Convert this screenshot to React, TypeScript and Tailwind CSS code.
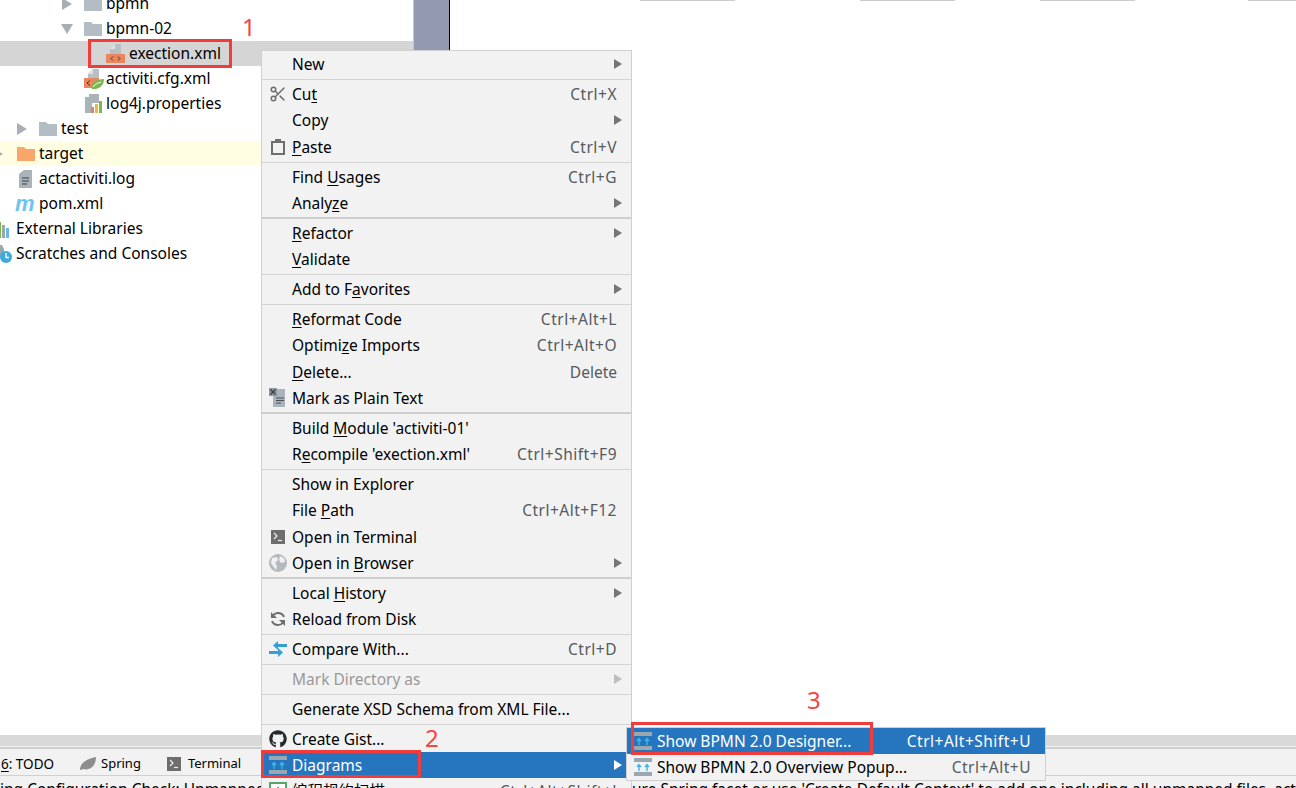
import { FaGithub } from "react-icons/fa";
import { Scissors } from "lucide-react";

const uiFont = "font-['Noto_Sans','Noto_Sans_CJK_SC',sans-serif]";

// "_x" marks the mnemonic letter
function Label({ text }: { text: string }) {
  const i = text.indexOf("_");
  if (i < 0) return <span className="pt-[2px]">{text}</span>;
  return (
    <span className="pt-[2px]">
      {text.slice(0, i)}
      <u className="underline decoration-1 underline-offset-2">{text[i + 1]}</u>
      {text.slice(i + 2)}
    </span>
  );
}

function Arrow({ className }: { className: string }) {
  return (
    <svg width="8" height="10" viewBox="0 0 8 10" className={className}>
      <path d="M0 0L8 5L0 10Z" fill="currentColor" />
    </svg>
  );
}

function DiagramIcon() {
  return (
    <svg width="18" height="18" viewBox="0 0 18 18">
      <rect x="0" y="0" width="18" height="4" fill="#9aa7b0" />
      <rect x="0" y="14" width="18" height="4" fill="#9aa7b0" />
      <path d="M5 13V7M3 9L5 6.5L7 9M13 13V7M11 9L13 6.5L15 9" stroke="#40b6e0" strokeWidth="1.4" fill="none" />
    </svg>
  );
}

function ClipboardIcon() {
  return (
    <svg width="14" height="16" viewBox="0 0 14 16">
      <path d="M1 3H13V15H1Z" fill="none" stroke="#6e6e6e" strokeWidth="2" />
      <rect x="4" y="0" width="6" height="4" fill="#6e6e6e" />
    </svg>
  );
}

function PlainTextIcon() {
  return (
    <svg width="18" height="20" viewBox="0 0 18 20">
      <rect x="4" y="1" width="12" height="18" fill="#a9b5bd" />
      <rect x="0" y="0" width="8" height="8" fill="#8f9aa1" />
      <path d="M1.500 1.500L6.500 6.500M6.500 1.500L1.500 6.500" stroke="#3c4144" strokeWidth="1.4" />
      <path d="M7 10H15M7 12.500H15M7 15H12" stroke="#4c5052" strokeWidth="1" />
    </svg>
  );
}

function TerminalIcon({ size }: { size: number }) {
  return (
    <svg width={size} height={size} viewBox="0 0 14 14">
      <rect width="14" height="14" fill="#6e6e6e" />
      <path d="M3 3L6 6L3 9" stroke="#eee" strokeWidth="1.2" fill="none" />
      <path d="M7 10.500H11" stroke="#eee" strokeWidth="1.2" />
    </svg>
  );
}

function GlobeIcon() {
  return (
    <svg width="18" height="18" viewBox="0 0 18 18">
      <circle cx="9" cy="9" r="9" fill="#b4b9bd" />
      <path d="M3 4L8 3L9 6L6 9L8 12L7 16L4 12L2 9ZM11 2L15 4L16 8L12 9L10 6Z" fill="#eef0f1" />
    </svg>
  );
}

function ReloadIcon() {
  return (
    <svg width="16" height="16" viewBox="0 0 16 16">
      <path d="M14 6A6.300 6.300 0 0 0 3 4.500M2 10A6.300 6.300 0 0 0 13 11.500" fill="none" stroke="#6e6e6e" strokeWidth="2" />
      <path d="M1 1V7H7ZM15 15V9H9Z" fill="#6e6e6e" />
    </svg>
  );
}

function CompareIcon() {
  return (
    <svg width="18" height="18" viewBox="0 0 18 18">
      <path d="M9 1V4H18V7H9V10L4 5.500Z" fill="#389fd6" />
      <path d="M9 8V11H0V14H9V17L14 12.500Z" fill="#389fd6" />
    </svg>
  );
}

function InspectIcon() {
  return (
    <svg width="18" height="18" viewBox="0 0 18 18">
      <rect x="1" y="1" width="16" height="16" fill="#fff" stroke="#59a869" strokeWidth="2" />
      <path d="M5 12V8M9 12V5M13 12V9" stroke="#59a869" strokeWidth="2" />
    </svg>
  );
}

type Row =
  | { sep: true; thick?: boolean }
  | {
      sep?: false;
      label: string;
      key2?: string;
      sub?: boolean;
      tall?: boolean;
      disabled?: boolean;
      active?: boolean;
      icon?: React.ReactNode;
    };

const menu: Row[] = [
  { label: "New", sub: true },
  { sep: true },
  { label: "Cu_t", key2: "Ctrl+X", icon: <Scissors size={18} color="#6e6e6e" strokeWidth={2} /> },
  { label: "Copy", sub: true, tall: true },
  { label: "_Paste", key2: "Ctrl+V", icon: <ClipboardIcon /> },
  { sep: true },
  { label: "Find _Usages", key2: "Ctrl+G" },
  { label: "Analy_ze", sub: true },
  { sep: true, thick: true },
  { label: "_Refactor", sub: true },
  { label: "_Validate" },
  { sep: true },
  { label: "Add to F_avorites", sub: true },
  { sep: true },
  { label: "_Reformat Code", key2: "Ctrl+Alt+L" },
  { label: "Optimi_ze Imports", key2: "Ctrl+Alt+O", tall: true },
  { label: "_Delete...", key2: "Delete" },
  { label: "Mark as Plain Text", icon: <PlainTextIcon /> },
  { sep: true, thick: true },
  { label: "Build _Module 'activiti-01'" },
  { label: "R_ecompile 'exection.xml'", key2: "Ctrl+Shift+F9" },
  { sep: true },
  { label: "Show in Explorer" },
  { label: "File _Path", key2: "Ctrl+Alt+F12", tall: true },
  { label: "Open in Terminal", icon: <TerminalIcon size={14} /> },
  { label: "Open in _Browser", sub: true, icon: <GlobeIcon /> },
  { sep: true, thick: true },
  { label: "Local _History", sub: true },
  { label: "Reload from Disk", icon: <ReloadIcon /> },
  { sep: true },
  { label: "Compare With...", key2: "Ctrl+D", icon: <CompareIcon /> },
  { sep: true },
  { label: "Mark Directory as", sub: true, disabled: true },
  { sep: true },
  { label: "Generate XSD Schema from XML File..." },
  { sep: true },
  { label: "Create Gist...", icon: <FaGithub size={18} color="#24292e" /> },
  { label: "Diagrams", sub: true, active: true, icon: <DiagramIcon /> },
  { label: "编程规约扫描", key2: "Ctrl+Alt+Shift+J", icon: <InspectIcon /> },
];

function FolderIcon({ color }: { color: string }) {
  return (
    <svg width="18" height="14" viewBox="0 0 18 14">
      <path d="M0 0H7L9 2H18V14H0Z" fill={color} />
    </svg>
  );
}

function XmlFileIcon() {
  return (
    <svg width="19" height="19" viewBox="0 0 19 19" className="-ml-px">
      <path d="M4 10V5L9 0H15V10Z" fill="#b8c0c6" />
      <path d="M4 5H9V0Z" fill="#dfe3e6" />
      <rect x="0" y="10" width="19" height="9" fill="#e8875f" />
      <path d="M7 12.500L5 14.500L7 16.500M12 12.500L14 14.500L12 16.500" stroke="#5a2d18" strokeWidth="1" fill="none" />
    </svg>
  );
}

function SpringXmlIcon() {
  return (
    <svg width="20" height="20" viewBox="0 0 20 20">
      <path d="M4 9V5L9 0H15V9Z" fill="#b8c0c6" />
      <path d="M4 5H9V0Z" fill="#dfe3e6" />
      <rect x="0" y="9" width="15" height="10" fill="#e8875f" />
      <path d="M6 11.500L3 14L6 16.500" stroke="#5a2d18" strokeWidth="1" fill="none" />
      <path d="M8 20C6 14 13 10 20 10C20 17 14 21 8 20Z" fill="#7cb84d" />
      <path d="M9 18C11 15 14 14 17 13" stroke="#fff" strokeWidth="1" fill="none" />
    </svg>
  );
}

function PropsIcon() {
  return (
    <svg width="18" height="20" viewBox="0 0 18 20">
      <path d="M1 19V3H5V0H15V9H8V19Z" fill="#a9b3ba" />
      <rect x="7" y="13" width="3" height="6" fill="#e5835a" />
      <rect x="11" y="10" width="3" height="9" fill="#e8b94a" />
      <rect x="15" y="7" width="3" height="12" fill="#7cb84d" />
    </svg>
  );
}

function LogIcon() {
  return (
    <svg width="15" height="18" viewBox="0 0 15 18" className="ml-[2px]">
      <path d="M0 4L5 0H13V18H0Z" fill="#a9b3ba" />
      <path d="M3 8H10M3 11H10M3 14H8" stroke="#3c4144" strokeWidth="1" />
    </svg>
  );
}

function MavenIcon() {
  return (
    <span className="-ml-[2px] font-['Liberation_Sans',sans-serif] text-[22px] leading-none font-bold italic text-[#6cc5ee]">m</span>
  );
}

function LibIcon() {
  return (
    <svg width="18" height="18" viewBox="0 0 18 18">
      <rect x="0" y="6" width="3" height="12" fill="#9aa7b0" />
      <rect x="4" y="2" width="3" height="16" fill="#7cb84d" />
      <rect x="8" y="5" width="3" height="13" fill="#9aa7b0" />
      <rect x="12" y="8" width="3" height="10" fill="#6cb8e0" />
    </svg>
  );
}

function ScratchIcon() {
  return (
    <svg width="20" height="20" viewBox="0 0 20 20">
      <path d="M2 1H8L10 5V12H2Z" fill="#9aa7b0" />
      <circle cx="12" cy="13" r="6" fill="#40a9dc" />
      <path d="M12 9V13.500H15" stroke="#fff" strokeWidth="1.3" fill="none" />
    </svg>
  );
}

function TreeArrow({ open, className }: { open?: boolean; className: string }) {
  return (
    <span className={className}>
      <svg width="12" height="12" viewBox="0 0 12 12">
        <path d={open ? "M0 1H12L6 11Z" : "M1 0L11 6L1 12Z"} fill="#a8aeb3" />
      </svg>
    </span>
  );
}

function TreeRow({
  className,
  icon,
  text,
  arrow,
}: {
  className: string;
  icon: React.ReactNode;
  text: string;
  arrow?: React.ReactNode;
}) {
  return (
    <div className={`flex h-[25px] items-center whitespace-nowrap ${className}`}>
      {arrow}
      <span className="flex w-[22px] shrink-0 items-center">{icon}</span>
      <span>{text}</span>
    </div>
  );
}

function Tree() {
  return (
    <div className="-mt-[9px] w-[413px] shrink-0 overflow-hidden text-[15.5px] text-black">
      <TreeRow className="pl-[61px]" arrow={<TreeArrow className="w-[23px] shrink-0" />} icon={<FolderIcon color="#b3bdc4" />} text="bpmn" />
      <TreeRow className="pl-[61px]" arrow={<TreeArrow open className="w-[23px] shrink-0" />} icon={<FolderIcon color="#b3bdc4" />} text="bpmn-02" />
      <TreeRow className="bg-[#d5d5d5] pl-[107px]" icon={<XmlFileIcon />} text="exection.xml" />
      <TreeRow className="pl-[84px]" icon={<SpringXmlIcon />} text="activiti.cfg.xml" />
      <TreeRow className="pl-[84px]" icon={<PropsIcon />} text="log4j.properties" />
      <TreeRow className="pl-[16px]" arrow={<TreeArrow className="w-[23px] shrink-0" />} icon={<FolderIcon color="#b3bdc4" />} text="test" />
      <TreeRow className="bg-[#fffee2] pl-0" arrow={<TreeArrow className="-ml-[8px] w-[25px] shrink-0" />} icon={<FolderIcon color="#f9a66c" />} text="target" />
      <TreeRow className="pl-[17px]" icon={<LogIcon />} text="actactiviti.log" />
      <TreeRow className="pl-[17px]" icon={<MavenIcon />} text="pom.xml" />
      <TreeRow className="-ml-[6px]" icon={<LibIcon />} text="External Libraries" />
      <TreeRow className="-ml-[6px]" icon={<ScratchIcon />} text="Scratches and Consoles" />
    </div>
  );
}

function ContextMenu() {
  return (
    <div className="absolute top-[50px] left-[261px] w-[371px] border border-[#d0d0d0] bg-[#f2f2f2] text-[15.5px] text-black">
      {menu.map((row, i) => {
        if (row.sep) {
          return (
            <div key={i} className="flex h-[4px] items-center">
              <div className={row.thick ? "h-[2px] w-full bg-[#cfcfcf]" : "h-px w-full bg-[#d4d4d4]"} />
            </div>
          );
        }
        const bg = row.active ? "bg-[#2675bf] text-white" : row.disabled ? "text-[#999999]" : "";
        return (
          <div key={i} className={`flex items-center pr-[14px] ${row.tall ? "h-[27px] pb-px" : "h-[26px]"} ${bg}`}>
            <span className="flex w-[30px] shrink-0 items-center justify-center pl-[1px]">{row.icon}</span>
            <Label text={row.label} />
            {row.key2 && (
              <span className={`ml-auto pt-[2px] text-[#555a5e] ${row.key2.includes("+") ? "tracking-[0.5px]" : ""}`}>
                {row.key2}
              </span>
            )}
            {row.sub && (
              <Arrow
                className={`ml-auto -mr-[5px] ${row.active ? "text-white" : row.disabled ? "text-[#bdbdbd]" : "text-[#757575]"}`}
              />
            )}
          </div>
        );
      })}
    </div>
  );
}

function SubMenu() {
  return (
    <div className="absolute top-[727px] left-[626px] w-[420px] border border-[#d0d0d0] bg-[#f2f2f2] text-[15.5px] text-black">
      <div className="flex h-[26px] items-center bg-[#2675bf] pr-[14px] text-white">
        <span className="flex w-[30px] shrink-0 items-center justify-center pl-[2px]"><DiagramIcon /></span>
        <span className="pt-[2px]">Show BPMN 2.0 Designer...</span>
        <span className="ml-auto pt-[2px] tracking-[0.5px]">Ctrl+Alt+Shift+U</span>
      </div>
      <div className="flex h-[26px] items-center pr-[14px]">
        <span className="flex w-[30px] shrink-0 items-center justify-center pl-[2px]"><DiagramIcon /></span>
        <span className="pt-[2px]">Show BPMN 2.0 Overview Popup...</span>
        <span className="ml-auto pt-[2px] tracking-[0.5px] text-[#555a5e]">Ctrl+Alt+U</span>
      </div>
    </div>
  );
}

function RedBox({ className }: { className: string }) {
  return <div className={`absolute border-[3px] border-[#f23c3c] ${className}`} />;
}

function Note({ className, n }: { className: string; n: string }) {
  return <div className={`absolute text-[24px] leading-none text-[#f74545] ${className}`}>{n}</div>;
}

export default function App() {
  return (
    <div className={`relative flex h-[788px] flex-col overflow-hidden bg-white ${uiFont}`}>
      <div className="flex min-h-0 flex-1">
        <Tree />
        <div className="w-[37px] shrink-0 border-r border-l border-r-black border-l-[#c8c8c8] bg-[#9299b0]" />
        {/* tab shadows at the top edge */}
        <div className="flex h-px flex-1 pl-[190px]">
          <div className="w-[95px] bg-[#cccccc]" />
          <div className="ml-[125px] w-[95px] bg-[#cccccc]" />
          <div className="ml-[85px] w-[95px] bg-[#cccccc]" />
          <div className="ml-[113px] flex-1 bg-[#cccccc]" />
        </div>
      </div>

      {/* horizontal scrollbar */}
      <div className="h-[11px] shrink-0 bg-[#d9d9d9]" />
      <div className="h-px shrink-0 bg-[#f2f2f2]" />
      <div className="h-[2px] shrink-0 bg-[#cfcfcf]" />

      {/* tool window bar */}
      <div className="flex h-[27px] shrink-0 items-center border-b border-[#d0d0d0] bg-[#f2f2f2] pt-[4px] text-[13px] text-black">
        <span className="ml-px w-[54px] text-[13.5px]"><u className="underline decoration-1 underline-offset-2">6</u>: TODO</span>
        <span className="ml-[25px] flex items-center">
          <svg width="16" height="14" viewBox="0 0 16 14">
            <path d="M0 13C0 6 6 2 16 0C16 8 11 14 3 12C2 12.500 1 13 0 13Z" fill="#8e8e8e" />
          </svg>
          <span className="ml-[5px]">Spring</span>
        </span>
        <span className="ml-[26px] flex items-center">
          <TerminalIcon size={14} />
          <span className="ml-[7px]">Terminal</span>
        </span>
      </div>

      {/* status bar */}
      <div className="flex h-[12px] shrink-0 overflow-hidden bg-[#f2f2f2] text-[15.5px] whitespace-nowrap text-black">
        <span className="w-[632px] shrink-0 pt-[2px]">ing Configuration Check: Unmapped</span>
        <span className="pt-[2px]">ure Spring facet or use 'Create Default Context' to add one including all unmapped files, act</span>
      </div>

      <ContextMenu />
      <SubMenu />

      <RedBox className="top-[39px] left-[88px] h-[29px] w-[144px]" />
      <RedBox className="top-[750px] left-[261px] h-[28px] w-[160px]" />
      <RedBox className="top-[722px] left-[631px] h-[33px] w-[242px]" />
      <Note className="top-[15px] left-[242px]" n="1" />
      <Note className="top-[726px] left-[425px]" n="2" />
      <Note className="top-[688px] left-[807px]" n="3" />
    </div>
  );
}
